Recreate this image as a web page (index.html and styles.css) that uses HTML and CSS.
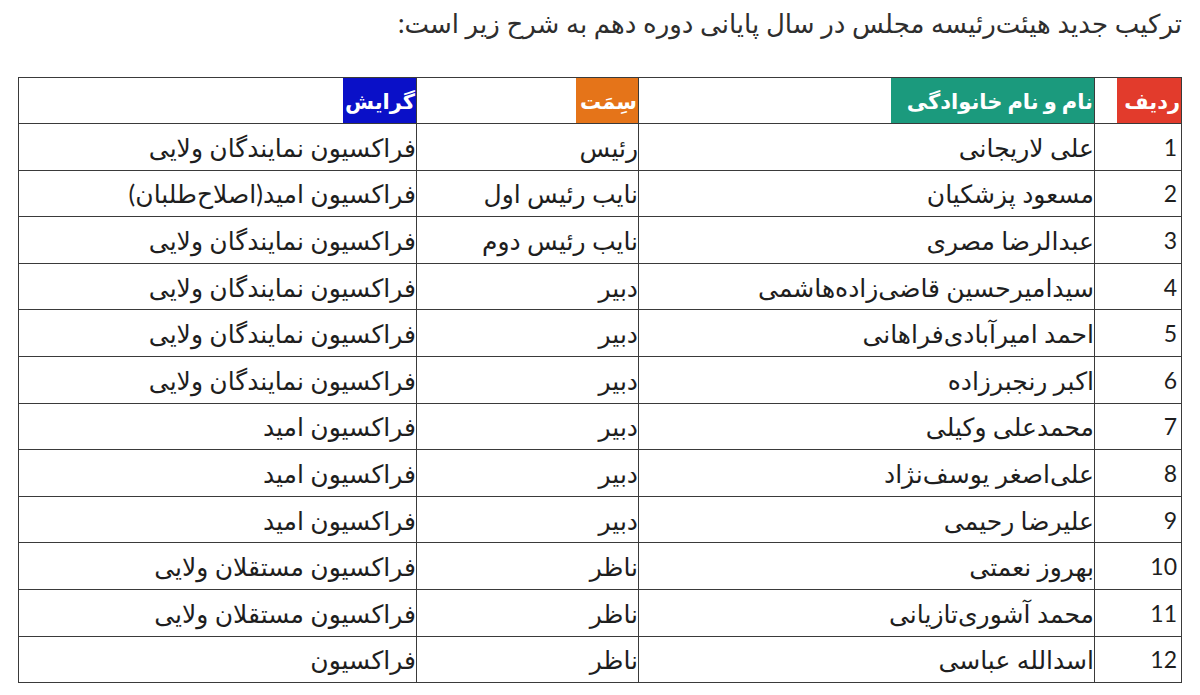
FILE: index.html
```html
<!DOCTYPE html>
<html lang="fa" dir="rtl">
<head>
<meta charset="utf-8">
<title>هیئت‌رئیسه مجلس</title>
<link rel="stylesheet" href="styles.css">
</head>
<body>
<div class="page">
  <p class="intro">ترکیب جدید هیئت‌رئیسه مجلس در سال پایانی دوره دهم به شرح زیر است:</p>
  <table class="board">
    <colgroup>
      <col class="c-idx">
      <col class="c-name">
      <col class="c-role">
      <col class="c-faction">
    </colgroup>
    <thead>
      <tr>
        <th><span class="tag tag-red">ردیف</span></th>
        <th><span class="tag tag-green">نام و نام خانوادگی</span></th>
        <th><span class="tag tag-orange">سِمَت</span></th>
        <th><span class="tag tag-blue">گرایش</span></th>
      </tr>
    </thead>
    <tbody>
      <tr><td class="num">1</td><td>علی لاریجانی</td><td>رئیس</td><td>فراکسیون نمایندگان ولایی</td></tr>
      <tr><td class="num">2</td><td>مسعود پزشکیان</td><td>نایب رئیس اول</td><td>فراکسیون امید(اصلاح‌طلبان)</td></tr>
      <tr><td class="num">3</td><td>عبدالرضا مصری</td><td>نایب رئیس دوم</td><td>فراکسیون نمایندگان ولایی</td></tr>
      <tr><td class="num">4</td><td>سیدامیرحسین قاضی‌زاده‌هاشمی</td><td>دبیر</td><td>فراکسیون نمایندگان ولایی</td></tr>
      <tr><td class="num">5</td><td>احمد امیرآبادی‌فراهانی</td><td>دبیر</td><td>فراکسیون نمایندگان ولایی</td></tr>
      <tr><td class="num">6</td><td>اکبر رنجبرزاده</td><td>دبیر</td><td>فراکسیون نمایندگان ولایی</td></tr>
      <tr><td class="num">7</td><td>محمدعلی وکیلی</td><td>دبیر</td><td>فراکسیون امید</td></tr>
      <tr><td class="num">8</td><td>علی‌اصغر یوسف‌نژاد</td><td>دبیر</td><td>فراکسیون امید</td></tr>
      <tr><td class="num">9</td><td>علیرضا رحیمی</td><td>دبیر</td><td>فراکسیون امید</td></tr>
      <tr><td class="num">10</td><td>بهروز نعمتی</td><td>ناظر</td><td>فراکسیون مستقلان ولایی</td></tr>
      <tr><td class="num">11</td><td>محمد آشوری‌تازیانی</td><td>ناظر</td><td>فراکسیون مستقلان ولایی</td></tr>
      <tr><td class="num">12</td><td>اسدالله عباسی</td><td>ناظر</td><td>فراکسیون</td></tr>
    </tbody>
  </table>
</div>
</body>
</html>
```
FILE: styles.css
```css
html, body {
  margin: 0;
  padding: 0;
  background: #ffffff;
}

body {
  font-family: Lato, "DejaVu Sans", sans-serif;
  color: #222222;
}

.page {
  width: 1200px;
  height: 695px;
  box-sizing: border-box;
  padding: 0 18px 0 19px;
  direction: rtl;
  overflow: hidden;
}

.intro {
  margin: 0;
  padding-top: 3px;
  height: 74px;
  font-size: 26px;
  line-height: 40px;
  color: #2e2e2e;
}

.board {
  width: 1163px;
  border-collapse: collapse;
  table-layout: fixed;
  border: 1px solid #333333;
}

.c-idx { width: 87px; }
.c-name { width: 456px; }
.c-role { width: 222px; }
.c-faction { width: 398px; }

.board th,
.board td {
  border: 1px solid #3a3a3a;
  padding: 0;
  text-align: right;
  vertical-align: middle;
  white-space: nowrap;
}

.board th {
  height: 45px;
}

.board td {
  height: 45.6px;
  font-size: 25px;
  line-height: 30px;
  color: #1e1e1e;
}

.board td.num {
  padding-right: 4px;
  font-size: 23px;
}

.tag {
  display: block;
  float: right;
  height: 45px;
  line-height: 45px;
  color: #ffffff;
  font-weight: bold;
  font-size: 21px;
  text-align: right;
  padding: 0 1px;
  overflow: hidden;
}

.tag-red { background: #e23b2c; width: 62px; }
.tag-green { background: #1b9a7d; width: 201px; }
.tag-orange { background: #e57419; width: 60px; }
.tag-blue { background: #0a10c8; width: 71px; }
```
